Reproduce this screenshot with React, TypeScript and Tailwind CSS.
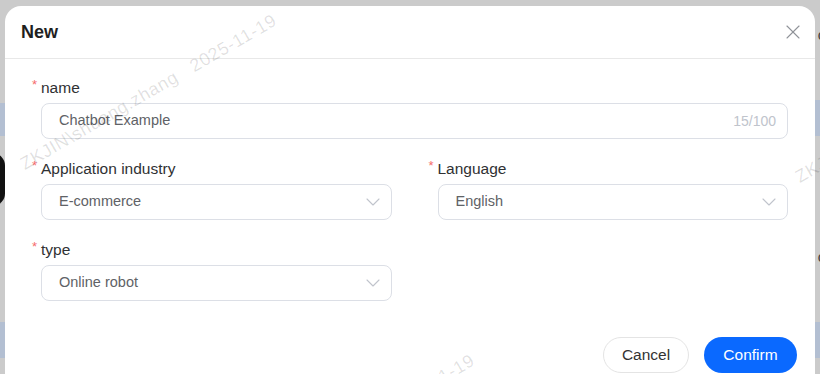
import { ChevronDown, X } from "lucide-react";

function Label({ text }: { text: string }) {
  return (
    <div className="flex items-center h-[22px] mb-[4px]">
      <span className="w-[9px] self-start pt-[1px] text-[13px] leading-[14px] text-[#f56c6c]">*</span>
      <span className="text-[15.5px] leading-[22px] text-[#303133]">{text}</span>
    </div>
  );
}

function SelectBox({ value }: { value: string }) {
  return (
    <div className="ml-[9px] h-[36px] border border-[#dcdfe6] rounded-[8px] pl-[17px] pr-[6px] flex items-center justify-between">
      <span className="text-[14.5px] text-[#606266]">{value}</span>
      <ChevronDown className="w-6 h-6 text-[#c0c4cc]" strokeWidth={1.1} />
    </div>
  );
}

function Watermark({ left, top }: { left: number; top: number }) {
  return (
    <span
      className="absolute pointer-events-none whitespace-pre text-[18px] tracking-[0.6px] text-black/[0.12] origin-left -rotate-30"
      style={{ left, top }}
    >
      {"ZKJIN\\shuang.zhang   2025-11-19"}
    </span>
  );
}

export default function App() {
  return (
    <div className="relative h-[374px] overflow-hidden bg-[#cbcbcb] pt-[6px] px-[5px] font-['Liberation_Sans',Arial,sans-serif]">
      {/* page behind the mask */}
      <div className="absolute left-0 top-[103px] w-[5px] h-[33px] bg-[#b3bfd2]" />
      <div className="absolute -left-[20px] top-[153px] w-[25px] h-[53px] rounded-full bg-[#111]" />
      <div className="absolute left-0 top-[322px] w-[5px] h-[36px] bg-[#b3bfd2]" />
      <div className="absolute right-0 top-[100px] w-[5px] h-[36px] bg-[#b3bfd2]" />
      <div className="absolute right-0 top-[322px] w-[5px] h-[36px] bg-[#b3bfd2]" />
      <span className="absolute right-[-6px] top-[24px] text-[15px] text-[#444]">o</span>
      <span className="absolute right-[-6px] top-[246px] text-[15px] text-[#444]">o</span>

      <div className="relative bg-white rounded-t-[16px] pb-6">
        <div className="flex items-center justify-between h-[53px] pl-4 pr-[10px] border-b border-[#e8e8e8]">
          <h2 className="text-[18px] font-bold text-[#1f1f1f]">New</h2>
          <X className="w-6 h-6 text-[#909399]" strokeWidth={1.1} />
        </div>

        <div className="px-[27px] pt-[18px]">
          <div className="mb-[19px]">
            <Label text="name" />
            <div className="ml-[9px] h-[36px] border border-[#dcdfe6] rounded-[8px] pl-[17px] pr-[11px] flex items-center justify-between">
              <span className="text-[14.5px] text-[#606266]">Chatbot Example</span>
              <span className="text-[14px] text-[#c0c4cc]">15/100</span>
            </div>
          </div>

          <div className="grid grid-cols-2 gap-x-[37px] gap-y-[19px]">
            <div>
              <Label text="Application industry" />
              <SelectBox value="E-commerce" />
            </div>
            <div>
              <Label text="Language" />
              <SelectBox value="English" />
            </div>
            <div>
              <Label text="type" />
              <SelectBox value="Online robot" />
            </div>
          </div>
        </div>

        <div className="flex justify-end gap-[15px] pt-[36px] pr-[18px]">
          <button className="h-[36px] w-[86px] rounded-full border border-[#e4e4e4] bg-white text-[15.5px] text-[#333]">
            Cancel
          </button>
          <button className="h-[36px] w-[93px] rounded-full bg-[#0a69ff] text-[15.5px] text-white">
            Confirm
          </button>
        </div>
      </div>

      <Watermark left={22} top={152} />
      <Watermark left={797} top={165} />
      <Watermark left={220} top={492} />
    </div>
  );
}
